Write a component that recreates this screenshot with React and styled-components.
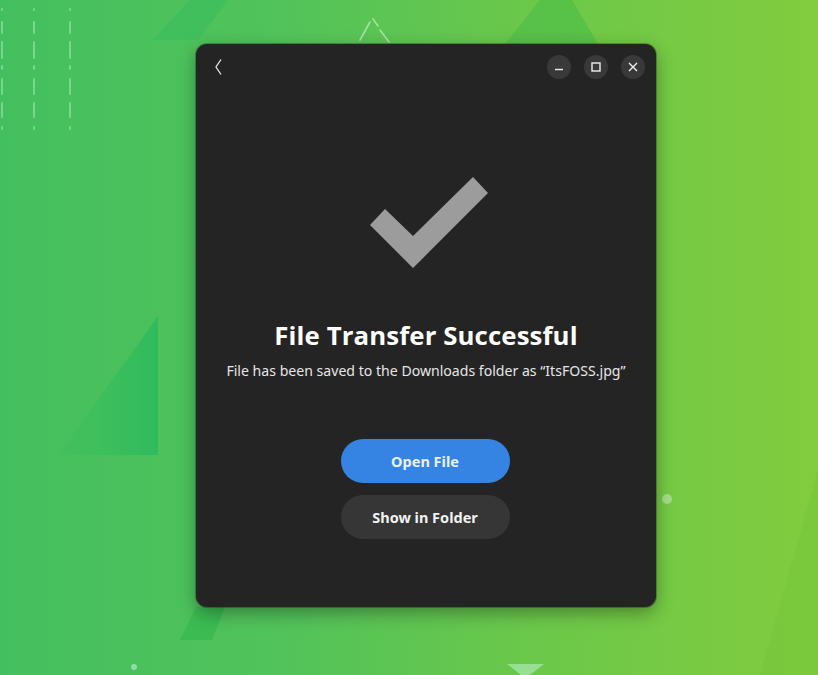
import React from 'react';
import styled, { createGlobalStyle } from 'styled-components';

const GlobalStyle = createGlobalStyle`
  html, body {
    margin: 0;
    padding: 0;
    width: 818px;
    height: 675px;
    overflow: hidden;
  }
  body {
    font-family: "Noto Sans", "DejaVu Sans", sans-serif;
  }
`;

const Desktop = styled.div`
  position: relative;
  width: 818px;
  height: 675px;
  overflow: hidden;
  background: linear-gradient(90deg, #44bf5f 0%, #52c35a 35%, #6bc84a 65%, #82cc3e 100%);
  padding: 44px 0 0 196px;
  box-sizing: border-box;
`;

const Wallpaper = styled.svg`
  position: absolute;
  inset: 0;
  width: 818px;
  height: 675px;
`;

const Window = styled.div`
  position: relative;
  width: 460px;
  height: 563px;
  background: #242424;
  border-radius: 11px;
  box-shadow: 0 6px 18px rgba(0, 0, 0, 0.35), 0 0 0 1px rgba(0, 0, 0, 0.25);
  display: flex;
  flex-direction: column;
  color: #ffffff;
`;

const HeaderBar = styled.div`
  height: 46px;
  display: flex;
  align-items: center;
  padding: 0 11px 0 14px;
`;

const BackButton = styled.button`
  width: 16px;
  height: 24px;
  padding: 0;
  border: none;
  background: transparent;
  display: flex;
  align-items: center;
  justify-content: center;
  cursor: pointer;
`;

const Spacer = styled.div`
  flex: 1;
`;

const WindowControls = styled.div`
  display: flex;
  gap: 13px;
`;

const ControlButton = styled.button`
  width: 24px;
  height: 24px;
  padding: 0;
  border: none;
  border-radius: 50%;
  background: #393939;
  display: flex;
  align-items: center;
  justify-content: center;
  cursor: pointer;
`;

const Content = styled.div`
  flex: 1;
  display: flex;
  flex-direction: column;
  align-items: center;
  padding-top: 87px;
`;

const CheckIcon = styled.svg`
  width: 118px;
  height: 92px;
  margin-left: 6px;
`;

const Title = styled.h1`
  margin: 50px 0 0;
  font-family: "Open Sans", "Noto Sans", sans-serif;
  font-weight: 700;
  font-size: 25.8px;
  line-height: 32px;
  color: #ffffff;
  letter-spacing: 0.1px;
`;

const Subtitle = styled.p`
  margin: 10px 0 0;
  font-family: "Noto Sans", "DejaVu Sans", sans-serif;
  font-size: 14.1px;
  line-height: 20px;
  color: #e6e6e6;
`;

const Actions = styled.div`
  margin-top: 58px;
  display: flex;
  flex-direction: column;
  gap: 12px;
  margin-right: 2px;
`;

const PillButton = styled.button`
  width: 169px;
  height: 44px;
  border: none;
  border-radius: 22px;
  background: ${(p) => (p.$primary ? '#3584e4' : '#363636')};
  color: ${(p) => (p.$primary ? '#eaf2fc' : '#f2f2f2')};
  font-family: "Noto Sans", "DejaVu Sans", sans-serif;
  font-weight: 700;
  font-size: 14.5px;
  cursor: pointer;
`;

const Wall = () => (
  <Wallpaper viewBox="0 0 818 675">
    <defs>
      <linearGradient id="tri" x1="0" y1="0" x2="1" y2="0">
        <stop offset="0" stopColor="#3fbf5c" stopOpacity="0.4" />
        <stop offset="1" stopColor="#2fbb5c" />
      </linearGradient>
    </defs>
    {/* top-left dark parallelogram */}
    <polygon points="190,0 228,0 198,40 153,40" fill="#3abd5e" opacity="0.6" />
    {/* top centre triangle */}
    <polygon points="505,44 540,0 572,0 598,44" fill="#4fbe48" opacity="0.7" />
    {/* left triangle */}
    <polygon points="58,455 158,316 158,455" fill="url(#tri)" />
    {/* bottom parallelogram under window */}
    <polygon points="196,607 225,607 212,640 180,640" fill="#35b84e" opacity="0.7" />
    {/* right diagonal band */}
    <polygon points="818,470 818,675 760,675" fill="#74c43a" opacity="0.5" />
    {/* dashed lines top-left */}
    {[2, 34, 70].map((x) => (
      <g key={x} stroke="#86e29a" strokeWidth="2" strokeLinecap="round" opacity="0.75">
        <line x1={x} y1="22" x2={x} y2="33" />
        <line x1={x} y1="42" x2={x} y2="58" />
        <line x1={x} y1="66" x2={x} y2="69" />
        <line x1={x} y1="79" x2={x} y2="94" />
        <line x1={x} y1="103" x2={x} y2="117" />
        <line x1={x} y1="127" x2={x} y2="129" />
        <line x1={x} y1="9" x2={x} y2="10" />
      </g>
    ))}
    {/* dashed triangle fragment top */}
    <g stroke="#b6ecae" strokeWidth="1.6" strokeLinecap="round" opacity="0.8">
      <line x1="373" y1="19" x2="378" y2="26" />
      <line x1="380" y1="30" x2="389" y2="42" />
      <line x1="370" y1="22" x2="360" y2="40" />
    </g>
    {/* dots */}
    <circle cx="667" cy="499" r="5" fill="#b7e6a8" opacity="0.7" />
    <circle cx="134" cy="667" r="3" fill="#9fe6b4" opacity="0.8" />
    <polygon points="507,664 544,664 530,675 521,675" fill="#9fe3a0" opacity="0.85" />
  </Wallpaper>
);

export default function App() {
  return (
    <>
      <GlobalStyle />
      <Desktop>
        <Wall />
        <Window>
          <HeaderBar>
            <BackButton aria-label="Back">
              <svg width="10" height="18" viewBox="0 0 10 18">
                <polyline points="8,1.5 3,9 8,16.5" fill="none" stroke="#e8e8e8" strokeWidth="1.3" />
              </svg>
            </BackButton>
            <Spacer />
            <WindowControls>
              <ControlButton aria-label="Minimize">
                <svg width="10" height="10" viewBox="0 0 10 10">
                  <line x1="1" y1="7.5" x2="9" y2="7.5" stroke="#eeeeee" strokeWidth="1.4" />
                </svg>
              </ControlButton>
              <ControlButton aria-label="Maximize">
                <svg width="10" height="10" viewBox="0 0 10 10">
                  <rect x="1" y="1" width="8" height="8" fill="none" stroke="#eeeeee" strokeWidth="1.4" />
                </svg>
              </ControlButton>
              <ControlButton aria-label="Close">
                <svg width="10" height="10" viewBox="0 0 10 10">
                  <path d="M1 1 L9 9 M9 1 L1 9" stroke="#eeeeee" strokeWidth="1.4" />
                </svg>
              </ControlButton>
            </WindowControls>
          </HeaderBar>
          <Content>
            <CheckIcon viewBox="0 0 118 92">
              <polygon points="0,48 15,32 43,59 103,0 118,16 43,91" fill="#9c9c9c" />
            </CheckIcon>
            <Title>File Transfer Successful</Title>
            <Subtitle>File has been saved to the Downloads folder as “ItsFOSS.jpg”</Subtitle>
            <Actions>
              <PillButton $primary>Open File</PillButton>
              <PillButton>Show in Folder</PillButton>
            </Actions>
          </Content>
        </Window>
      </Desktop>
    </>
  );
}
